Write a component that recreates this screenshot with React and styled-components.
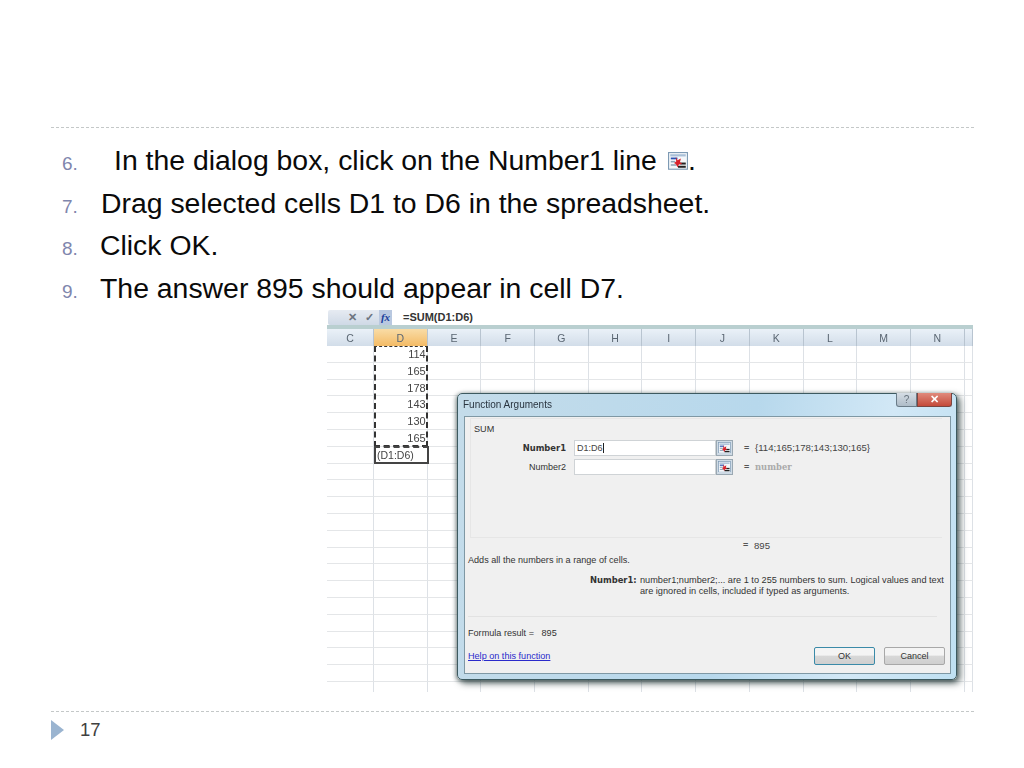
import React from 'react';
import styled, { createGlobalStyle } from 'styled-components';

const Global = createGlobalStyle`
  html, body { margin: 0; padding: 0; background: #fff; }
  body { font-family: "Liberation Sans", Arial, sans-serif; }
`;
const Slide = styled.div`
  width: 1024px; height: 768px; position: relative; overflow: hidden; background: #fff;
  display: flex; flex-direction: column; padding: 127px 51px 0; box-sizing: border-box;
`;
const Rule = styled.div`
  height: 0; border-top: 1px dashed #c4c8c8; margin-right: -1px;
`;
const Steps = styled.ol`
  list-style: none; margin: 11px 0 0; padding: 0 0 0 11px; height: 170px;
`;
const Step = styled.li`
  display: flex; align-items: baseline; height: 42.5px; line-height: 42.5px;
  font-size: 28.4px; color: #0a0a0a; white-space: nowrap;
`;
const Num = styled.span`
  width: ${p => p.$w}px; flex: none; font-size: 19px; color: #7f86ad;
`;
const Picture = styled.div`
  margin: 1px 0 0 276px; width: 646px; height: 382px; position: relative; overflow: hidden;
  filter: blur(0.5px); font-family: "Liberation Sans", Arial, sans-serif; color: #333;
`;
const FormulaBar = styled.div`
  height: 15px; display: flex; align-items: center; background: #fff;
`;
const BarBtns = styled.div`
  width: 64px; height: 15px; margin-left: 1px; display: flex; align-items: center; gap: 8px;
  padding-left: 20px; box-sizing: border-box; background: linear-gradient(#e6ebf2, #cfd9e6);
  color: #6c7480; font-size: 11px; font-weight: 700; border-radius: 2px;
`;
const Fx = styled.span`
  width: 13px; height: 15px; background: #b9c8e0; color: #1c3f9b; font: italic 700 11px "Liberation Serif", serif;
  text-align: center; line-height: 14px; margin-left: -3px; flex: none;
`;
const Formula = styled.span`
  font-size: 11px; font-weight: 700; margin: -2px 0 0 11px; color: #333;
`;
const BarEdge = styled.div`
  height: 4px; background: #b9cfd0;
`;
const Sheet = styled.div`
  display: grid; grid-template-columns: 47px repeat(11, 53.7px) 1fr;
  grid-template-rows: 17px; grid-auto-rows: 16.8px; position: relative;
`;
const Head = styled.div`
  display: flex; align-items: center; justify-content: center; font-size: 10.5px; color: #5a6672;
  background: ${p => p.$on ? 'linear-gradient(#f9dca6,#f4bb66)' : 'linear-gradient(#eaf1f8,#d2dde9)'};
  border-right: 1px solid #b8c4d0; box-sizing: border-box;
`;
const Cell = styled.div`
  border-right: 1px solid #dde1e6; border-bottom: 1px solid #e4e6e8; box-sizing: border-box;
  font-size: 11px; line-height: 17px; text-align: right; padding-right: 1px; color: #444;
`;
const Marquee = styled.div`
  position: absolute; left: 47px; top: 17px; width: 54px; height: 101px; box-sizing: border-box;
  border: 2px dashed #333; border-top-width: 1px;
`;
const Active = styled.div`
  position: absolute; left: 47px; top: 117px; width: 55px; height: 18px; box-sizing: border-box;
  border: 2px solid #444; border-top-style: dashed; font-size: 10.5px; line-height: 15px; padding-left: 1px; color: #444;
`;
const Dialog = styled.div`
  position: absolute; left: 130px; top: 83px; width: 500px; height: 287px; box-sizing: border-box;
  padding: 22px 5px 6px 6px; border-radius: 5px; border: 1px solid #3d5a60;
  background: linear-gradient(100deg, #c4dcea 0%, #b7d8ec 55%, #d2e8f6 80%, #bfe0f2 100%);
  box-shadow: 3px 3px 7px rgba(30,50,50,.75), -1px 1px 4px rgba(30,50,50,.5);
`;
const Title = styled.div`
  position: absolute; left: 5px; top: 5px; font-size: 10px; color: #2a3540;
`;
const Caption = styled.div`
  position: absolute; right: 4px; top: -1px; display: flex;
`;
const Help = styled.div`
  width: 21px; height: 14px; box-sizing: border-box; border: 1px solid #6a7c88; border-top: 0; border-radius: 0 0 0 3px;
  background: linear-gradient(#d5dde4,#aebcc8); text-align: center; font-size: 10px; line-height: 13px; color: #66727c;
`;
const Close = styled.div`
  width: 35px; height: 14px; box-sizing: border-box; border: 1px solid #7a4540; border-top: 0; border-radius: 0 0 3px 0;
  background: linear-gradient(#e08a7c,#c44a3a); text-align: center; font-size: 11px; line-height: 12px; font-weight: 700; color: #fff;
`;
const Client = styled.div`
  height: 258px; background: #f0f0f0; border: 1px solid #7f98a4; box-sizing: border-box;
  display: flex; flex-direction: column; padding: 1px 5px 0 3px; font-size: 9.1px; color: #333;
`;
const Group = styled.div`
  height: 120px; margin: 0 3px 0 2px; border: 1px solid #e6e6e6; border-right: 0; box-sizing: border-box; padding: 5px 0 0 3px;
`;
const ArgRow = styled.div`
  display: flex; align-items: center; height: 17px; margin-top: ${p => p.$mt || 2}px;
`;
const ArgLabel = styled.div`
  width: 92px; flex: none; text-align: right;
  font: ${p => p.$bold ? '700 8.4px "DejaVu Sans"' : '9px "Liberation Sans"'}, sans-serif; color: #333;
`;
const Input = styled.div`
  width: 142px; height: 16px; margin-left: 8px; flex: none; background: #fff; border: 1px solid #cfd3d6; box-sizing: border-box;
  font-size: 9px; line-height: 14px; padding-left: 2px; color: #444;
`;
const Caret = styled.span`
  border-right: 1px solid #222;
`;
const RefBtn = styled.div`
  width: 17px; height: 16px; background: #cfdbe6; border: 1px solid #9aa8b2; box-sizing: border-box; display: flex; align-items: center; justify-content: center; flex: none;
`;
const Eq = styled.span`
  margin-left: 11px; width: 11px; flex: none; font-weight: 700; font-size: 9px; color: #555;
`;
const Val = styled.span`
  font-size: 9.6px; color: #444; white-space: nowrap;
`;
const Hint = styled.span`
  font: 700 8.4px "DejaVu Serif", serif; color: #aaa;
`;
const ResultRow = styled.div`
  height: 15px; line-height: 15px; padding-left: 264px; display: flex; align-items: center;
`;
const Adds = styled.div`
  height: 17px; line-height: 11px; margin-top: 2px;
`;
const DescRow = styled.div`
  display: flex; height: 41px; line-height: 11px; padding-left: 122px; margin: 3px 8px 0 0; border-bottom: 1px solid #e2e2e2;
`;
const DescLabel = styled.div`
  width: 50px; flex: none; font: 700 8.4px/11px "DejaVu Sans", sans-serif; white-space: nowrap;
`;
const Desc = styled.div`
  font-size: 9.2px; white-space: nowrap;
`;
const Formula2 = styled.div`
  margin-top: 10px; height: 14px; line-height: 12px;
`;
const Bottom = styled.div`
  display: flex; justify-content: space-between; align-items: center; height: 18px; margin-top: 6px;
`;
const HelpLink = styled.a`
  color: #2a2acb; text-decoration: underline;
`;
const Buttons = styled.div`
  display: flex; gap: 9px;
`;
const Btn = styled.div`
  width: 61px; height: 18px; box-sizing: border-box; border-radius: 2px; text-align: center; font-size: 9px; line-height: 16px;
  background: linear-gradient(#f4f4f4 45%, #d8d8d8 50%, #cfcfcf);
  border: 1px solid ${p => p.$primary ? '#3a8aa8' : '#a8a8a8'};
`;
const SlideIcon = styled.span`
  display: inline-flex; margin-left: 11px; align-self: center; margin-top: 2px;
`;
const Footer = styled.div`
  position: absolute; left: 51px; right: 51px; top: 711px;
`;
const FootRow = styled.div`
  display: flex; align-items: center; margin-top: 7px; height: 21px;
`;
const Arrow = styled.div`
  width: 0; height: 0; border-left: 13px solid #9ab4d0; border-top: 10px solid transparent; border-bottom: 10px solid transparent;
`;
const PageNo = styled.span`
  margin-left: 16px; font-size: 18.5px; color: #404040;
`;

const RangeIcon = ({ size = 13 }) => (
  <svg width={size} height={size * 16 / 18} viewBox="0 0 18 16">
    <rect x="0.5" y="0.5" width="17" height="15" fill="#f4f7fa" stroke="#7d9ab4" />
    <rect x="2" y="2" width="14" height="2" fill="#a9c0d8" />
    <rect x="2.5" y="5" width="6" height="1.6" fill="#2a4fb0" />
    <rect x="2.5" y="8" width="4" height="1.4" fill="#8fa3b6" />
    <rect x="2.5" y="11" width="5" height="1.4" fill="#8fa3b6" />
    <rect x="11" y="9.5" width="5" height="1.8" fill="#222" />
    <rect x="9" y="12.4" width="7" height="1.8" fill="#222" />
    <path d="M7 4.5l1.6 3 3-1.6-.8 3.2 2 1.6-3 .6-1.2 2.4-1.6-3-1.6-.8 2-1.4z" fill="#d8202a" />
  </svg>
);

const cols = ['C','D','E','F','G','H','I','J','K','L','M','N',''];
const values = ['114','165','178','143','130','165'];
const rows = Array.from({ length: 21 }, (_, i) => i);

export default function App() {
  return (
    <Slide>
      <Global />
      <Rule />
      <Steps>
        <Step><Num $w={52}>6.</Num>In the dialog box, click on the Number1 line<SlideIcon><RangeIcon size={20} /></SlideIcon>.</Step>
        <Step><Num $w={39}>7.</Num>Drag selected cells D1 to D6 in the spreadsheet.</Step>
        <Step><Num $w={38}>8.</Num>Click OK.</Step>
        <Step><Num $w={38}>9.</Num>The answer 895 should appear in cell D7.</Step>
      </Steps>
      <Picture>
        <FormulaBar>
          <BarBtns><span>✕</span><span>✓</span><Fx>fx</Fx></BarBtns>
          <Formula>=SUM(D1:D6)</Formula>
        </FormulaBar>
        <BarEdge />
        <Sheet>
          {cols.map((c, i) => <Head key={i} $on={c === 'D'}>{c}</Head>)}
          {rows.flatMap(r => cols.map((c, i) => (
            <Cell key={`${r}-${i}`}>{c === 'D' ? values[r] : ''}</Cell>
          )))}
          <Marquee />
          <Active>(D1:D6)</Active>
        </Sheet>
        <Dialog>
          <Title>Function Arguments</Title>
          <Caption><Help>?</Help><Close>✕</Close></Caption>
          <Client>
            <Group>
              <div>SUM</div>
              <ArgRow $mt={5}>
                <ArgLabel $bold>Number1</ArgLabel>
                <Input>D1:D6<Caret /></Input>
                <RefBtn><RangeIcon /></RefBtn>
                <Eq>=</Eq>
                <Val>{'{114;165;178;143;130;165}'}</Val>
              </ArgRow>
              <ArgRow>
                <ArgLabel>Number2</ArgLabel>
                <Input />
                <RefBtn><RangeIcon /></RefBtn>
                <Eq>=</Eq>
                <Hint>number</Hint>
              </ArgRow>
            </Group>
            <ResultRow><Eq>=</Eq><Val>895</Val></ResultRow>
            <Adds>Adds all the numbers in a range of cells.</Adds>
            <DescRow>
              <DescLabel>Number1:</DescLabel>
              <Desc>
                number1;number2;... are 1 to 255 numbers to sum. Logical values and text<br />
                are ignored in cells, included if typed as arguments.
              </Desc>
            </DescRow>
            <Formula2>Formula result =&nbsp;&nbsp;&nbsp;895</Formula2>
            <Bottom>
              <HelpLink>Help on this function</HelpLink>
              <Buttons><Btn $primary>OK</Btn><Btn>Cancel</Btn></Buttons>
            </Bottom>
          </Client>
        </Dialog>
      </Picture>
      <Footer>
        <Rule />
        <FootRow><Arrow /><PageNo>17</PageNo></FootRow>
      </Footer>
    </Slide>
  );
}
